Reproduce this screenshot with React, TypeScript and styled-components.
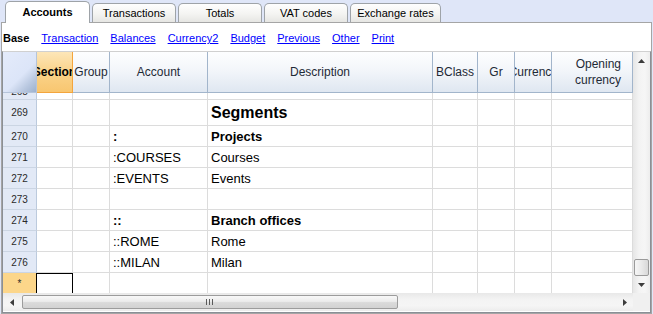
import React from "react";
import styled, { createGlobalStyle, css } from "styled-components";

const GlobalStyle = createGlobalStyle`
  html, body { margin: 0; padding: 0; }
  body { background: #dfe6f8; font-family: "Liberation Sans", Arial, sans-serif; }
`;

const Page = styled.div`
  width: 653px;
  height: 314px;
  display: flex;
  flex-direction: column;
  background: #dfe6f8;
  overflow: hidden;
`;

const TabBar = styled.div`
  height: 22px;
  display: flex;
  align-items: flex-end;
  gap: 2px;
  padding-left: 5px;
  flex: none;
`;

const Tab = styled.div<{ $active?: boolean; $w: number }>`
  box-sizing: border-box;
  width: ${(p) => p.$w}px;
  height: ${(p) => (p.$active ? 22 : 19)}px;
  border: 1px solid #9ea3a8;
  border-bottom: none;
  border-radius: 5px 5px 0 0;
  display: flex;
  align-items: center;
  justify-content: center;
  font-size: 11px;
  color: #000;
  position: relative;
  ${(p) =>
    p.$active
      ? css`
          background: #fff;
          font-weight: bold;
          margin-bottom: -1px;
          z-index: 1;
          padding-bottom: 1px;
        `
      : css`
          background: linear-gradient(#fefefe, #f4f4f2 55%, #e6e6e3);
        `}
`;

const Panel = styled.div`
  flex: 1;
  margin: 0 1px 0 1px;
  background: #fff;
  border: 1px solid #a5a5a5;
  display: flex;
  flex-direction: column;
  min-height: 0;
`;

const NavRow = styled.div`
  height: 28px;
  display: flex;
  align-items: center;
  gap: 12px;
  padding-left: 1px;
  padding-top: 2px;
  box-sizing: border-box;
  font-size: 11px;
  flex: none;
`;

const NavLabel = styled.span`
  font-weight: bold;
  color: #000;
`;

const NavLink = styled.a`
  color: #0000ff;
  text-decoration: underline;
  cursor: pointer;
`;

const GridBox = styled.div`
  flex: 1;
  border: 1px solid #8a8f96;
  border-top-color: #d0d0d0;
  display: grid;
  grid-template-columns: 630px 17px;
  grid-template-rows: 241px 18px;
`;

const Table = styled.div`
  display: flex;
  flex-direction: column;
  overflow: hidden;
`;

const HeaderRow = styled.div`
  height: 41px;
  display: flex;
  flex: none;
  position: relative;
  z-index: 1;
`;

const HeadCell = styled.div<{ $w: number; $tone?: "corner" | "active"; $align?: "right" }>`
  box-sizing: border-box;
  width: ${(p) => p.$w}px;
  flex: none;
  height: 41px;
  display: flex;
  align-items: center;
  justify-content: ${(p) => (p.$align === "right" ? "flex-end" : "center")};
  text-align: ${(p) => (p.$align === "right" ? "right" : "center")};
  padding-right: ${(p) => (p.$align === "right" ? 11 : 0)}px;
  overflow: hidden;
  white-space: nowrap;
  font-size: 12px;
  line-height: 16px;
  color: #1e2a36;
  border-right: 1px solid #a2b5cb;
  border-bottom: 1px solid #a2b5cb;
  background: linear-gradient(#fdfeff, #f3f6fa 45%, #dfe7f1);
  ${(p) =>
    p.$tone === "active" &&
    css`
      background: linear-gradient(#fde6b8, #fad38a 50%, #f8c670);
      border-right-color: #f4a53c;
      border-bottom-color: #f4a53c;
      font-weight: bold;
      color: #000;
    `}
  ${(p) =>
    p.$tone === "corner" &&
    css`
      background: linear-gradient(135deg, #e4ebfb 0%, #dce5f8 58%, #b9c8e0 80%, #9db1cd 100%);
      border-right-color: #b5c4da;
      border-bottom-color: #b5c4da;
    `}
`;

const Body = styled.div`
  flex: 1;
  overflow: hidden;
  display: flex;
  flex-direction: column;
`;

const Row = styled.div<{ $h: number; $lead?: number }>`
  height: ${(p) => p.$h}px;
  flex: none;
  display: flex;
  margin-top: ${(p) => p.$lead ?? 0}px;
`;

const NumCell = styled.div<{ $new?: boolean; $shift?: number }>`
  box-sizing: border-box;
  width: 34px;
  flex: none;
  display: flex;
  align-items: center;
  justify-content: center;
  padding-top: ${(p) => p.$shift ?? 0}px;
  font-size: 10px;
  color: #2a2a2a;
  background: ${(p) => (p.$new ? "#fcd68a" : "#e2e9f6")};
  border-right: 1px solid ${(p) => (p.$new ? "#f1b04e" : "#bccadd")};
  border-bottom: 1px solid ${(p) => (p.$new ? "#f0a53a" : "#cbd5e3")};
`;

const Cell = styled.div<{ $w: number; $bold?: boolean; $big?: boolean; $selected?: boolean }>`
  box-sizing: border-box;
  width: ${(p) => p.$w}px;
  flex: none;
  display: flex;
  align-items: center;
  padding: 0 3px;
  overflow: hidden;
  white-space: nowrap;
  font-size: ${(p) => (p.$big ? 16 : 13)}px;
  font-weight: ${(p) => (p.$bold ? "bold" : "normal")};
  color: #000;
  border-right: 1px solid #dcdcdc;
  border-bottom: 1px solid #dcdcdc;
  ${(p) =>
    p.$selected &&
    css`
      border-color: #000;
      box-shadow: inset 1px 1px 0 #000;
      margin-left: -1px;
      width: ${p.$w + 1}px;
    `}
`;

const VScroll = styled.div`
  display: flex;
  flex-direction: column;
  background: linear-gradient(90deg, #e6e6e6, #f3f3f3 35%, #f6f6f6 70%, #ededed);
`;

const ScrollBtn = styled.div`
  width: 17px;
  height: 17px;
  flex: none;
  display: flex;
  align-items: center;
  justify-content: center;
`;

const VTrack = styled.div`
  flex: 1;
  display: flex;
  flex-direction: column;
  justify-content: flex-end;
  align-items: center;
`;

const VThumb = styled.div`
  box-sizing: border-box;
  width: 15px;
  height: 17px;
  border: 1px solid #9a9a9a;
  border-radius: 2px;
  background: linear-gradient(90deg, #f6f6f6, #e9e9e9 50%, #d8d8d8);
`;

const HScroll = styled.div`
  display: flex;
  align-items: center;
  background: linear-gradient(#e8e8e8, #f3f3f3 35%, #f5f5f5 70%, #ececec);
`;

const HThumb = styled.div`
  box-sizing: border-box;
  width: 376px;
  height: 14px;
  margin-left: 2px;
  flex: none;
  border: 1px solid #9c9c9c;
  border-radius: 2px;
  background: linear-gradient(#f8f8f8, #ececec 45%, #dadada 55%, #d2d2d2);
  display: flex;
  align-items: center;
  justify-content: center;
`;

const HTrack = styled.div`
  flex: 1;
`;

const Corner = styled.div`
  background: #f0f0f0;
`;

type Col = { key: string; label: string; w: number; active?: boolean; align?: "right" };

const cols: Col[] = [
  { key: "section", label: "Section", w: 36, active: true },
  { key: "group", label: "Group", w: 37 },
  { key: "account", label: "Account", w: 98 },
  { key: "desc", label: "Description", w: 225 },
  { key: "bclass", label: "BClass", w: 45 },
  { key: "gr", label: "Gr", w: 37 },
  { key: "currency", label: "Currency", w: 37 },
  { key: "opening", label: "Opening\ncurrency", w: 81, align: "right" },
];

type RowData = {
  num: string;
  account?: string;
  desc?: string;
  bold?: boolean;
  big?: boolean;
  h?: number;
  lead?: number;
  shift?: number;
  isNew?: boolean;
};

const rows: RowData[] = [
  { num: "268", lead: -14, shift: 5 },
  { num: "269", desc: "Segments", bold: true, big: true, h: 26 },
  { num: "270", account: ":", desc: "Projects", bold: true },
  { num: "271", account: ":COURSES", desc: "Courses" },
  { num: "272", account: ":EVENTS", desc: "Events" },
  { num: "273" },
  { num: "274", account: "::", desc: "Branch offices", bold: true },
  { num: "275", account: "::ROME", desc: "Rome" },
  { num: "276", account: "::MILAN", desc: "Milan" },
  { num: "*", isNew: true },
];

const tabs = [
  { label: "Accounts", w: 85 },
  { label: "Transactions", w: 84 },
  { label: "Totals", w: 84 },
  { label: "VAT codes", w: 84 },
  { label: "Exchange rates", w: 91 },
];
const links = ["Transaction", "Balances", "Currency2", "Budget", "Previous", "Other", "Print"];

const Arrow = ({ dir }: { dir: "up" | "down" | "left" | "right" }) => {
  const pts = {
    up: "0,4 7,4 3.5,0",
    down: "0,0 7,0 3.5,4",
    left: "4,0 4,7 0,3.5",
    right: "0,0 0,7 4,3.5",
  }[dir];
  const vertical = dir === "up" || dir === "down";
  return (
    <svg width={vertical ? 7 : 4} height={vertical ? 4 : 7} viewBox={vertical ? "0 0 7 4" : "0 0 4 7"}>
      <polygon points={pts} fill="#3c3c3c" />
    </svg>
  );
};

const Grip = () => (
  <svg width="8" height="6" viewBox="0 0 8 6">
    <rect x="0" y="0" width="1" height="6" fill="#5a5a5a" />
    <rect x="3" y="0" width="1" height="6" fill="#5a5a5a" />
    <rect x="6" y="0" width="1" height="6" fill="#5a5a5a" />
  </svg>
);

export default function App() {
  return (
    <Page>
      <GlobalStyle />
      <TabBar>
        {tabs.map((t, i) => (
          <Tab key={t.label} $active={i === 0} $w={t.w}>
            {t.label}
          </Tab>
        ))}
      </TabBar>
      <Panel>
        <NavRow>
          <NavLabel>Base</NavLabel>
          {links.map((l) => (
            <NavLink key={l}>{l}</NavLink>
          ))}
        </NavRow>
        <GridBox>
          <Table>
            <HeaderRow>
              <HeadCell $w={34} $tone="corner" />
              {cols.map((c) => (
                <HeadCell key={c.key} $w={c.w} $tone={c.active ? "active" : undefined} $align={c.align}>
                  {c.label.includes("\n") ? (
                    <span>
                      {c.label.split("\n").map((s, i) => (
                        <React.Fragment key={i}>
                          {i > 0 && <br />}
                          {s}
                        </React.Fragment>
                      ))}
                    </span>
                  ) : (
                    c.label
                  )}
                </HeadCell>
              ))}
            </HeaderRow>
            <Body>
              {rows.map((r) => (
                <Row key={r.num} $h={r.h ?? 21} $lead={r.lead}>
                  <NumCell $new={r.isNew} $shift={r.shift}>{r.num}</NumCell>
                  {cols.map((c, ci) => (
                    <Cell
                      key={c.key}
                      $w={c.w}
                      $bold={r.bold}
                      $big={r.big && c.key === "desc"}
                      $selected={r.isNew && ci === 0}
                    >
                      {c.key === "account" ? r.account : c.key === "desc" ? r.desc : null}
                    </Cell>
                  ))}
                </Row>
              ))}
            </Body>
          </Table>
          <VScroll>
            <ScrollBtn>
              <Arrow dir="up" />
            </ScrollBtn>
            <VTrack>
              <VThumb />
            </VTrack>
            <ScrollBtn>
              <Arrow dir="down" />
            </ScrollBtn>
          </VScroll>
          <HScroll>
            <ScrollBtn>
              <Arrow dir="left" />
            </ScrollBtn>
            <HThumb>
              <Grip />
            </HThumb>
            <HTrack />
            <ScrollBtn>
              <Arrow dir="right" />
            </ScrollBtn>
          </HScroll>
          <Corner />
        </GridBox>
      </Panel>
    </Page>
  );
}
